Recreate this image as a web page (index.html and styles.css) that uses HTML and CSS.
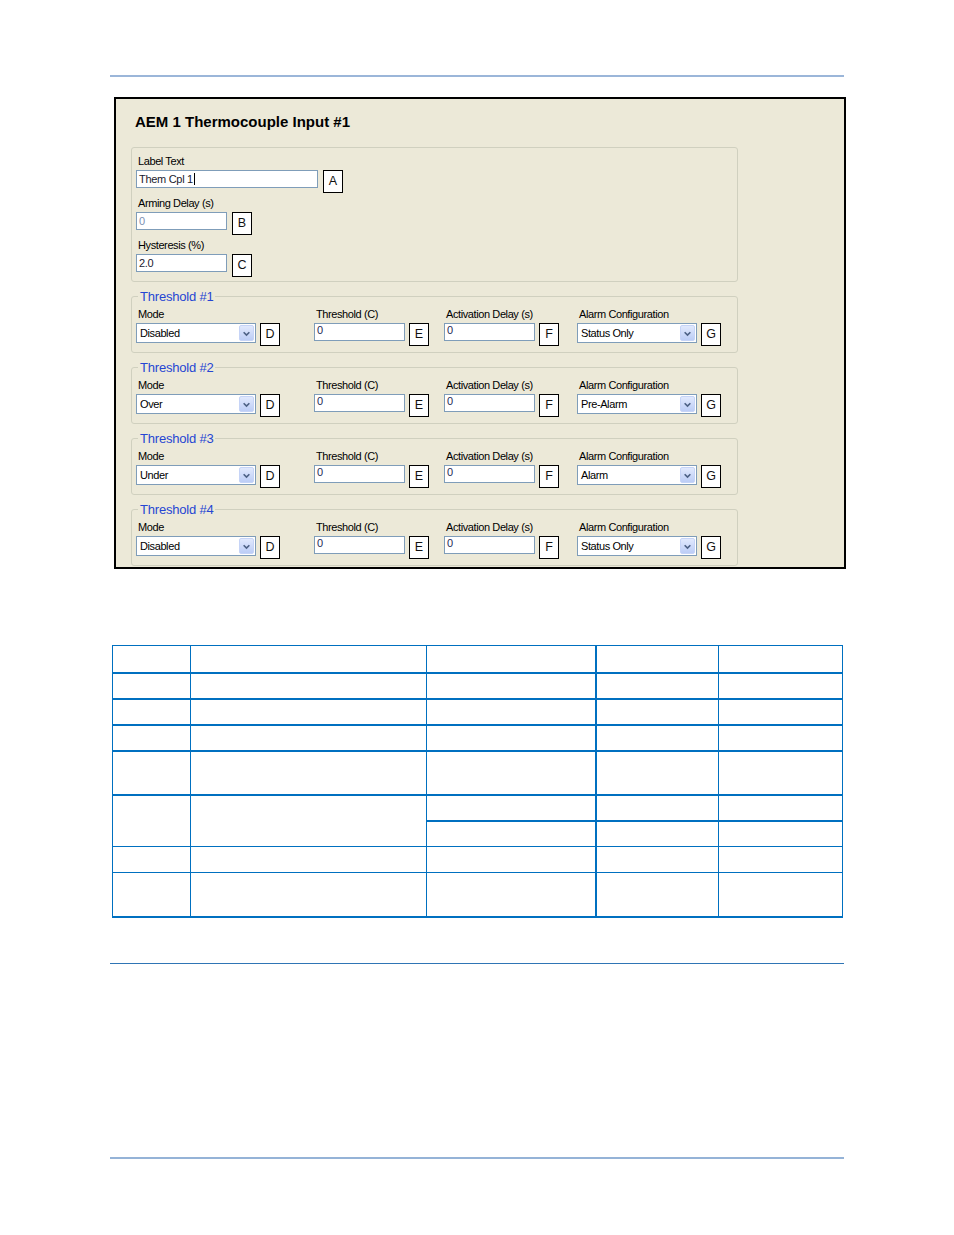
FILE: index.html
```html
<!DOCTYPE html>
<html>
<head>
<meta charset="utf-8">
<link rel="stylesheet" href="styles.css">
</head>
<body>
<div class="rule-top"></div>

<section class="panel">
  <h1 class="title">AEM 1 Thermocouple Input #1</h1>

  <div class="group">
    <div class="field">
      <div class="lbl">Label Text</div>
      <div class="row"><div class="input wide">Them Cpl 1<span class="caret"></span></div><div class="tag">A</div></div>
    </div>
    <div class="field">
      <div class="lbl">Arming Delay (s)</div>
      <div class="row"><div class="input light">0</div><div class="tag">B</div></div>
    </div>
    <div class="field">
      <div class="lbl">Hysteresis (%)</div>
      <div class="row"><div class="input">2.0</div><div class="tag">C</div></div>
    </div>
  </div>

  <fieldset class="thr">
    <legend>Threshold #1</legend>
    <div class="thr-grid">
      <div class="field"><div class="lbl">Mode</div><div class="row tight"><div class="select"><span class="val">Disabled</span><span class="btn"><svg viewBox="0 0 15 16" width="15" height="16"><path d="M4 6.5 L7.5 10 L11 6.5" fill="none" stroke="#4d6185" stroke-width="2"/></svg></span></div><div class="tag">D</div></div></div>
      <div class="field"><div class="lbl">Threshold (C)</div><div class="row tight"><div class="input num">0</div><div class="tag">E</div></div></div>
      <div class="field"><div class="lbl">Activation Delay (s)</div><div class="row tight"><div class="input num">0</div><div class="tag">F</div></div></div>
      <div class="field"><div class="lbl">Alarm Configuration</div><div class="row tight"><div class="select"><span class="val">Status Only</span><span class="btn"><svg viewBox="0 0 15 16" width="15" height="16"><path d="M4 6.5 L7.5 10 L11 6.5" fill="none" stroke="#4d6185" stroke-width="2"/></svg></span></div><div class="tag">G</div></div></div>
    </div>
  </fieldset>

  <fieldset class="thr">
    <legend>Threshold #2</legend>
    <div class="thr-grid">
      <div class="field"><div class="lbl">Mode</div><div class="row tight"><div class="select"><span class="val">Over</span><span class="btn"><svg viewBox="0 0 15 16" width="15" height="16"><path d="M4 6.5 L7.5 10 L11 6.5" fill="none" stroke="#4d6185" stroke-width="2"/></svg></span></div><div class="tag">D</div></div></div>
      <div class="field"><div class="lbl">Threshold (C)</div><div class="row tight"><div class="input num">0</div><div class="tag">E</div></div></div>
      <div class="field"><div class="lbl">Activation Delay (s)</div><div class="row tight"><div class="input num">0</div><div class="tag">F</div></div></div>
      <div class="field"><div class="lbl">Alarm Configuration</div><div class="row tight"><div class="select"><span class="val">Pre-Alarm</span><span class="btn"><svg viewBox="0 0 15 16" width="15" height="16"><path d="M4 6.5 L7.5 10 L11 6.5" fill="none" stroke="#4d6185" stroke-width="2"/></svg></span></div><div class="tag">G</div></div></div>
    </div>
  </fieldset>

  <fieldset class="thr">
    <legend>Threshold #3</legend>
    <div class="thr-grid">
      <div class="field"><div class="lbl">Mode</div><div class="row tight"><div class="select"><span class="val">Under</span><span class="btn"><svg viewBox="0 0 15 16" width="15" height="16"><path d="M4 6.5 L7.5 10 L11 6.5" fill="none" stroke="#4d6185" stroke-width="2"/></svg></span></div><div class="tag">D</div></div></div>
      <div class="field"><div class="lbl">Threshold (C)</div><div class="row tight"><div class="input num">0</div><div class="tag">E</div></div></div>
      <div class="field"><div class="lbl">Activation Delay (s)</div><div class="row tight"><div class="input num">0</div><div class="tag">F</div></div></div>
      <div class="field"><div class="lbl">Alarm Configuration</div><div class="row tight"><div class="select"><span class="val">Alarm</span><span class="btn"><svg viewBox="0 0 15 16" width="15" height="16"><path d="M4 6.5 L7.5 10 L11 6.5" fill="none" stroke="#4d6185" stroke-width="2"/></svg></span></div><div class="tag">G</div></div></div>
    </div>
  </fieldset>

  <fieldset class="thr">
    <legend>Threshold #4</legend>
    <div class="thr-grid">
      <div class="field"><div class="lbl">Mode</div><div class="row tight"><div class="select"><span class="val">Disabled</span><span class="btn"><svg viewBox="0 0 15 16" width="15" height="16"><path d="M4 6.5 L7.5 10 L11 6.5" fill="none" stroke="#4d6185" stroke-width="2"/></svg></span></div><div class="tag">D</div></div></div>
      <div class="field"><div class="lbl">Threshold (C)</div><div class="row tight"><div class="input num">0</div><div class="tag">E</div></div></div>
      <div class="field"><div class="lbl">Activation Delay (s)</div><div class="row tight"><div class="input num">0</div><div class="tag">F</div></div></div>
      <div class="field"><div class="lbl">Alarm Configuration</div><div class="row tight"><div class="select"><span class="val">Status Only</span><span class="btn"><svg viewBox="0 0 15 16" width="15" height="16"><path d="M4 6.5 L7.5 10 L11 6.5" fill="none" stroke="#4d6185" stroke-width="2"/></svg></span></div><div class="tag">G</div></div></div>
    </div>
  </fieldset>
</section>

<table class="spec">
  <colgroup><col class="c1"><col class="c2"><col class="c3"><col class="c4"><col class="c5"></colgroup>
  <tr class="rh"><td></td><td></td><td></td><td class="sep"></td><td></td></tr>
  <tr class="r26 tk"><td></td><td></td><td></td><td class="sep"></td><td></td></tr>
  <tr class="r26 tk"><td></td><td></td><td></td><td class="sep"></td><td></td></tr>
  <tr class="r26 tk"><td></td><td></td><td></td><td class="sep"></td><td></td></tr>
  <tr class="r44 tk"><td></td><td></td><td></td><td class="sep"></td><td></td></tr>
  <tr class="r26 tk"><td rowspan="2"></td><td rowspan="2"></td><td></td><td class="sep"></td><td></td></tr>
  <tr class="r26 tk"><td></td><td class="sep"></td><td></td></tr>
  <tr class="r26"><td></td><td></td><td></td><td class="sep"></td><td></td></tr>
  <tr class="r44 last"><td></td><td></td><td></td><td class="sep"></td><td></td></tr>
</table>

<div class="rule-mid"></div>
<div class="rule-bot"></div>
</body>
</html>
```

FILE: styles.css
```css
html, body {
  margin: 0;
  padding: 0;
  background: #ffffff;
}

body {
  font-family: "Liberation Sans", Arial, sans-serif;
}

.rule-top {
  height: 2px;
  background: #9bb6d9;
  margin: 75px 110px 0;
}

.panel {
  box-sizing: border-box;
  width: 732px;
  height: 472px;
  margin: 20px 0 0 114px;
  border: 2px solid #000;
  background: #ece9d8;
  padding: 14px 0 0 15px;
  overflow: hidden;
}

.title {
  margin: 0 0 16px 4px;
  font-size: 15px;
  line-height: 18px;
  font-weight: bold;
  color: #000;
}

.group {
  box-sizing: border-box;
  width: 607px;
  border: 1px solid #d0d0bf;
  border-radius: 3px;
  padding: 7px 4px 4px;
  display: flex;
  flex-direction: column;
  gap: 4px;
}

.field {
  display: flex;
  flex-direction: column;
  gap: 2px;
}

.lbl {
  font-size: 11px;
  line-height: 13px;
  letter-spacing: -0.4px;
  color: #000;
  margin-left: 2px;
  white-space: nowrap;
}

.row {
  display: flex;
  align-items: flex-start;
  gap: 5px;
}

.row.tight {
  gap: 4px;
}

.input {
  box-sizing: border-box;
  width: 91px;
  height: 18px;
  border: 1px solid #7f9db9;
  background: #fff;
  font-size: 11px;
  line-height: 16px;
  letter-spacing: -0.3px;
  padding-left: 2px;
  color: #1a1a2e;
  white-space: nowrap;
}

.input.wide {
  width: 182px;
}

.input.light {
  color: #7d8fb3;
}

.input.num {
  line-height: 13px;
  color: #1f2a55;
}

.caret {
  display: inline-block;
  width: 1px;
  height: 12px;
  background: #000;
  vertical-align: -2px;
  margin-left: 1px;
}

.tag {
  box-sizing: border-box;
  width: 20px;
  height: 23px;
  border: 1px solid #000;
  background: #fff;
  font-size: 12.5px;
  line-height: 21px;
  text-align: center;
  color: #111;
}

.thr {
  box-sizing: border-box;
  width: 607px;
  margin: 8px 0 0;
  padding: 5px 4px 6px;
  border: 1px solid #d0d0bf;
  border-radius: 3px;
  min-inline-size: 0;
}

.thr legend {
  margin-left: 2px;
  padding: 0 2px;
  font-size: 13px;
  line-height: 13px;
  letter-spacing: -0.2px;
  color: #2646d3;
}

.thr-grid {
  display: grid;
  grid-template-columns: 178px 130px 133px auto;
}

.select {
  box-sizing: border-box;
  width: 120px;
  height: 20px;
  border: 1px solid #7f9db9;
  background: #fff;
  display: flex;
  align-items: center;
  justify-content: space-between;
}

.select .val {
  font-size: 11px;
  letter-spacing: -0.4px;
  padding-left: 3px;
  color: #000;
  white-space: nowrap;
}

.select .btn {
  box-sizing: border-box;
  width: 15px;
  height: 16px;
  margin-right: 1px;
  border: 1px solid #c6d4f7;
  border-radius: 2px;
  background: linear-gradient(#e1e9fd, #bccdf6);
  display: flex;
  align-items: center;
  justify-content: center;
}

.select .btn svg {
  display: block;
  width: 13px;
  height: 13px;
}

/* table */
.spec {
  border-collapse: collapse;
  table-layout: fixed;
  width: 730px;
  margin: 76px 0 0 112px;
}

.spec td {
  border: 1px solid #0070c0;
  padding: 0;
}

.spec .c1 { width: 78px; }
.spec .c2 { width: 236px; }
.spec .c3 { width: 169px; }
.spec .c4 { width: 123px; }
.spec .c5 { width: 124px; }

.spec .rh { height: 27px; }
.spec .r26 { height: 26px; }
.spec .r44 { height: 44px; }

.spec tr.tk > td { border-top-width: 2px; }
.spec td.sep { border-left-width: 2px; }
.spec tr.last > td { border-bottom-width: 2px; }

.rule-mid {
  height: 1px;
  background: #2f75b5;
  margin: 45px 110px 0;
}

.rule-bot {
  height: 2px;
  background: #95b3d7;
  margin: 193px 110px 0;
}
```
